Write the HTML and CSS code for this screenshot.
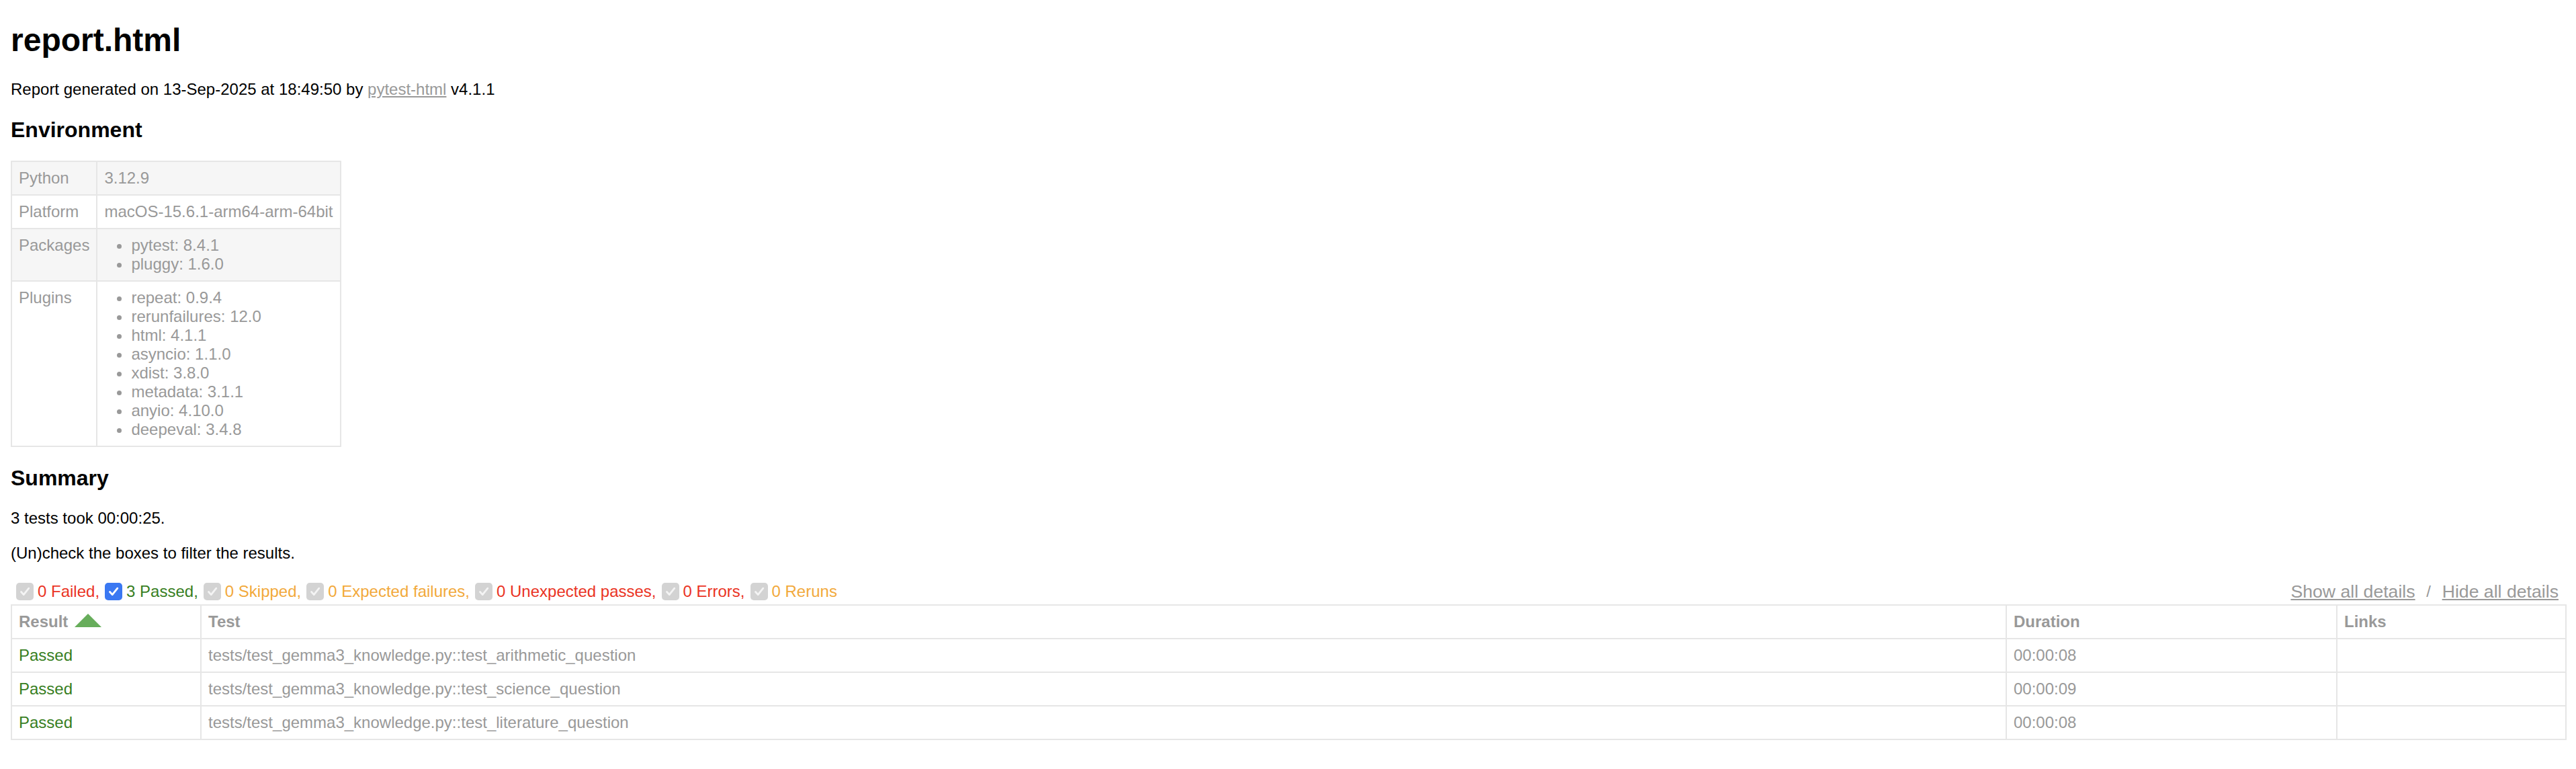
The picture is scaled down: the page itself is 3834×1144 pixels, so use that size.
FILE: index.html
```html
<!DOCTYPE html>
<html lang="en">
<head>
<meta charset="utf-8">
<title>report.html</title>
<link rel="stylesheet" href="styles.css">
</head>
<body>
<h1 class="title">report.html</h1>
<p class="generated">Report generated on 13-Sep-2025 at 18:49:50 by <a class="link" href="#">pytest-html</a> v4.1.1</p>

<div class="environment-header"><h2 class="section-title">Environment</h2></div>
<table class="environment">
  <tbody>
    <tr><td>Python</td><td>3.12.9</td></tr>
    <tr><td>Platform</td><td>macOS-15.6.1-arm64-arm-64bit</td></tr>
    <tr><td>Packages</td><td><ul class="env-list"><li>pytest: 8.4.1</li><li>pluggy: 1.6.0</li></ul></td></tr>
    <tr><td>Plugins</td><td><ul class="env-list"><li>repeat: 0.9.4</li><li>rerunfailures: 12.0</li><li>html: 4.1.1</li><li>asyncio: 1.1.0</li><li>xdist: 3.8.0</li><li>metadata: 3.1.1</li><li>anyio: 4.10.0</li><li>deepeval: 3.4.8</li></ul></td></tr>
  </tbody>
</table>

<div class="summary">
  <h2 class="section-title">Summary</h2>
  <p class="run-count">3 tests took 00:00:25.</p>
  <p class="filter-hint">(Un)check the boxes to filter the results.</p>
  <div class="controls">
    <div class="filters">
      <span class="check check--disabled"><svg viewBox="0 0 26 26" width="26" height="26"><path d="M7.5 13.5 L11.2 17.6 L18.8 8.2" fill="none" stroke="#f4f4f4" stroke-width="2.8" stroke-linecap="round" stroke-linejoin="round"/></svg></span><span class="failed">0 Failed,</span>
      <span class="check check--on"><svg viewBox="0 0 26 26" width="26" height="26"><path d="M7.5 13.5 L11.2 17.6 L18.8 8.2" fill="none" stroke="#ffffff" stroke-width="2.8" stroke-linecap="round" stroke-linejoin="round"/></svg></span><span class="passed">3 Passed,</span>
      <span class="check check--disabled"><svg viewBox="0 0 26 26" width="26" height="26"><path d="M7.5 13.5 L11.2 17.6 L18.8 8.2" fill="none" stroke="#f4f4f4" stroke-width="2.8" stroke-linecap="round" stroke-linejoin="round"/></svg></span><span class="skipped">0 Skipped,</span>
      <span class="check check--disabled"><svg viewBox="0 0 26 26" width="26" height="26"><path d="M7.5 13.5 L11.2 17.6 L18.8 8.2" fill="none" stroke="#f4f4f4" stroke-width="2.8" stroke-linecap="round" stroke-linejoin="round"/></svg></span><span class="skipped">0 Expected failures,</span>
      <span class="check check--disabled"><svg viewBox="0 0 26 26" width="26" height="26"><path d="M7.5 13.5 L11.2 17.6 L18.8 8.2" fill="none" stroke="#f4f4f4" stroke-width="2.8" stroke-linecap="round" stroke-linejoin="round"/></svg></span><span class="failed">0 Unexpected passes,</span>
      <span class="check check--disabled"><svg viewBox="0 0 26 26" width="26" height="26"><path d="M7.5 13.5 L11.2 17.6 L18.8 8.2" fill="none" stroke="#f4f4f4" stroke-width="2.8" stroke-linecap="round" stroke-linejoin="round"/></svg></span><span class="failed">0 Errors,</span>
      <span class="check check--disabled"><svg viewBox="0 0 26 26" width="26" height="26"><path d="M7.5 13.5 L11.2 17.6 L18.8 8.2" fill="none" stroke="#f4f4f4" stroke-width="2.8" stroke-linecap="round" stroke-linejoin="round"/></svg></span><span class="skipped">0 Reruns</span>
    </div>
    <div class="collapse">
      <button class="collapse-btn" type="button">Show all details</button><span class="sep">&nbsp;/&nbsp;</span><button class="collapse-btn" type="button">Hide all details</button>
    </div>
  </div>
</div>

<table class="results">
  <colgroup>
    <col class="col-w-result">
    <col class="col-w-test">
    <col class="col-w-duration">
    <col class="col-w-links">
  </colgroup>
  <thead>
    <tr>
      <th class="sortable asc">Result</th>
      <th>Test</th>
      <th>Duration</th>
      <th>Links</th>
    </tr>
  </thead>
  <tbody>
    <tr class="row-passed"><td class="col-result">Passed</td><td>tests/test_gemma3_knowledge.py::test_arithmetic_question</td><td>00:00:08</td><td></td></tr>
    <tr class="row-passed"><td class="col-result">Passed</td><td>tests/test_gemma3_knowledge.py::test_science_question</td><td>00:00:09</td><td></td></tr>
    <tr class="row-passed"><td class="col-result">Passed</td><td>tests/test_gemma3_knowledge.py::test_literature_question</td><td>00:00:08</td><td></td></tr>
  </tbody>
</table>
</body>
</html>
```

FILE: styles.css
```css
html {
  background: #ffffff;
}

body {
  margin: 0;
  padding: 0 16px 16px;
  font-family: "Liberation Sans", Arial, Helvetica, sans-serif;
  font-size: 24px;
  color: #999999;
  min-width: 1600px;
}

.title {
  font-size: 48px;
  color: #000000;
  margin: 32px 0;
}

.section-title {
  font-size: 32px;
  color: #000000;
  margin: 27.5px 0;
}

p {
  color: #000000;
  margin: 24px 0;
}

.link {
  color: #999999;
}

table {
  border-collapse: collapse;
}

/* Environment */
.environment td {
  padding: 10px;
  border: 2px solid #e6e6e6;
  vertical-align: top;
}

.environment tr:nth-child(odd) {
  background-color: #f6f6f6;
}

.env-list {
  margin: 0;
  padding: 0 40px;
}

/* Result colours */
.passed,
.row-passed .col-result {
  color: #377e22;
}

.skipped {
  color: #f2a93b;
}

.failed {
  color: #ea3323;
}

/* Controls */
.controls {
  display: flex;
  justify-content: space-between;
  align-items: center;
}

.filters,
.collapse {
  display: flex;
  align-items: center;
}

.check {
  display: inline-flex;
  width: 26px;
  height: 26px;
  margin: 6px 6px 6px 8px;
  border-radius: 5px;
  box-sizing: border-box;
}

.check svg {
  display: block;
}

.check--disabled {
  background: #d3d3d3;
}

.check--on {
  background: #3a78f2;
}

.collapse-btn {
  font-family: "Liberation Sans", Arial, Helvetica, sans-serif;
  font-size: 26.67px;
  color: #999999;
  border: none;
  background: none;
  padding: 2px 10px;
  text-decoration: underline;
  cursor: pointer;
}

.sep {
  color: #999999;
}

/* Results table */
.results {
  border: 2px solid #e6e6e6;
  color: #999999;
  font-size: 24px;
  width: 100%;
  table-layout: fixed;
}

.col-w-result { width: 282px; }
.col-w-test { width: 2687px; }
.col-w-duration { width: 492px; }
.col-w-links { width: 341px; }

.results th,
.results td {
  padding: 10px;
  border: 2px solid #e6e6e6;
  text-align: left;
  white-space: nowrap;
}

.results th {
  font-weight: bold;
}

.sortable.asc::after {
  content: "";
  display: inline-block;
  width: 0;
  height: 0;
  margin-left: 10px;
  border-left: 20px solid transparent;
  border-right: 20px solid transparent;
  border-bottom: 20px solid #67ad5b;
}
```
